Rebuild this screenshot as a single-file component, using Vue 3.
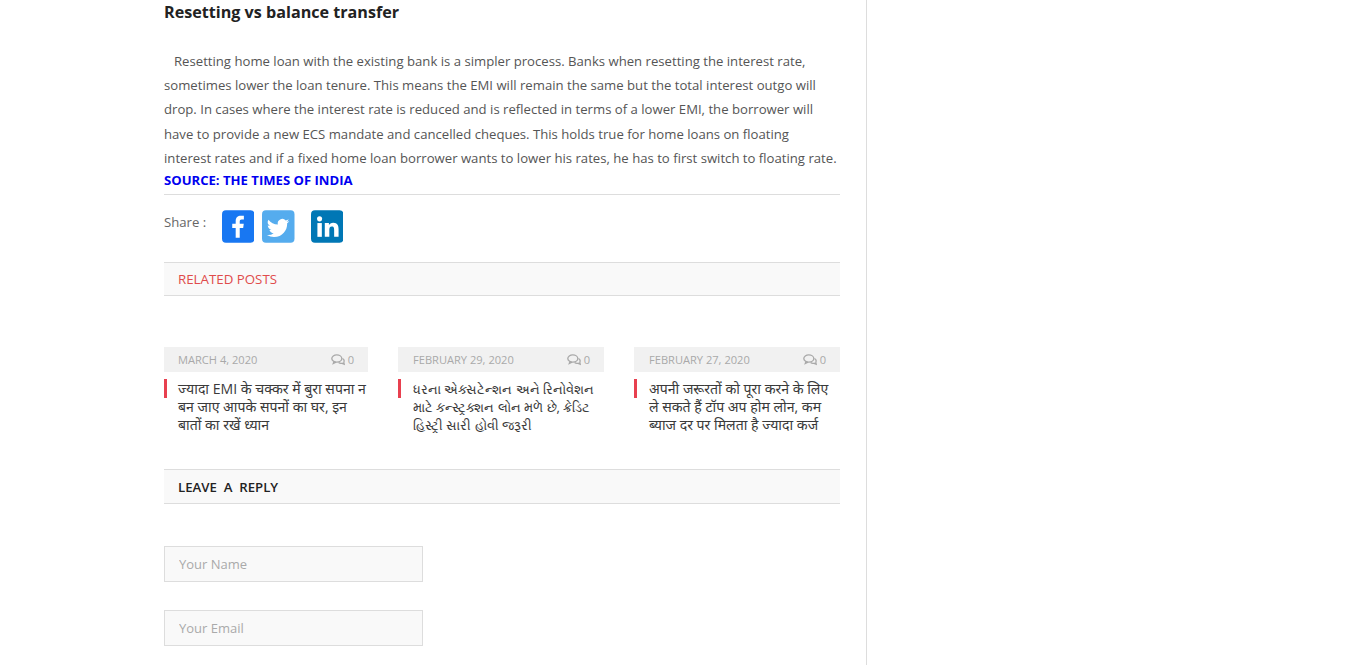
<script setup>
const posts = [
  { date: 'MARCH 4, 2020', lang: 'hi', title: 'ज्यादा EMI के चक्कर में बुरा सपना न बन जाए आपके सपनों का घर, इन बातों का रखें ध्यान' },
  { date: 'FEBRUARY 29, 2020', lang: 'gu', title: 'ધરના એક્સટેન્શન અને રિનોવેશન માટે કન્સ્ટ્રક્શન લોન મળે છે, ક્રેડિટ હિસ્ટ્રી સારી હોવી જરૂરી' },
  { date: 'FEBRUARY 27, 2020', lang: 'hi', title: 'अपनी जरूरतों को पूरा करने के लिए ले सकते हैं टॉप अप होम लोन, कम ब्याज दर पर मिलता है ज्यादा कर्ज' }
]
</script>

<template>
  <div class="page">
    <main class="content">
      <h2 class="heading">Resetting vs balance transfer</h2>
      <p class="body-text">Resetting home loan with the existing bank is a simpler process. Banks when resetting the interest rate, sometimes lower the loan tenure. This means the EMI will remain the same but the total interest outgo will drop. In cases where the interest rate is reduced and is reflected in terms of a lower EMI, the borrower will have to provide a new ECS mandate and cancelled cheques. This holds true for home loans on floating interest rates and if a fixed home loan borrower wants to lower his rates, he has to first switch to floating rate.</p>
      <div class="source">SOURCE: THE TIMES OF INDIA</div>

      <div class="share">
        <span class="share-label">Share :</span>
        <svg class="icon fb" viewBox="0 0 33 33" aria-label="Facebook">
          <rect width="33" height="33" rx="4" fill="#1877f2" />
          <path d="M18 28V18h3.500l.6-4.200H18v-2.400c0-1.200.4-2 2.100-2h2.100V5.700c-.4 0-1.700-.2-3.100-.2-3.100 0-5.200 1.900-5.200 5.300v3H10.400V18h3.500v10z" fill="#fff" />
        </svg>
        <svg class="icon tw" viewBox="0 0 33 33" aria-label="Twitter">
          <rect width="33" height="33" rx="4" fill="#55acee" />
          <path transform="translate(1.600 3) scale(.9)" d="M29 8.900c-.9.400-1.900.700-3 .8 1.100-.6 1.900-1.600 2.300-2.800-1 .6-2.100 1-3.300 1.200a5.200 5.200 0 0 0-8.900 4.700C11.800 12.600 8 10.500 5.500 7.300a5.200 5.200 0 0 0 1.600 6.900c-.9 0-1.700-.2-2.400-.6v.1c0 2.500 1.800 4.600 4.200 5.100-.8.200-1.600.2-2.300.1.700 2.100 2.600 3.500 4.800 3.600A10.400 10.400 0 0 1 3.800 24.600a14.700 14.700 0 0 0 8 2.300c9.600 0 14.800-7.900 14.800-14.800v-.7c1-.7 1.800-1.500 2.400-2.500z" fill="#fff" />
        </svg>
        <svg class="icon in" viewBox="0 0 33 33" aria-label="LinkedIn">
          <rect width="33" height="33" rx="4" fill="#0077b5" />
          <circle cx="8.700" cy="8.700" r="2.600" fill="#fff" />
          <rect x="6.500" y="13" width="4.500" height="14" fill="#fff" />
          <path d="M14 13h4.200v1.900c.7-1.200 2.200-2.300 4.400-2.300 4.500 0 5.400 3 5.400 6.800V27h-4.500v-6.800c0-1.700 0-3.700-2.300-3.700s-2.600 1.800-2.600 3.600V27H14z" fill="#fff" />
        </svg>
      </div>

      <div class="bar related">RELATED POSTS</div>

      <div class="posts">
        <article v-for="post in posts" :key="post.date" class="post">
          <div class="meta">
            <span>{{ post.date }}</span>
            <span class="comments">
              <svg class="bubble" viewBox="0 0 14 12" fill="none" stroke="#a9a9a9" stroke-width="1.300">
                <ellipse cx="5.800" cy="4.500" rx="5" ry="3.600" />
                <path d="M3 7.500 2.300 9.500 5 8.100" />
                <path d="M11.500 4.500c1.500.9 2 2.300 1.300 3.700l.4 2-2.100-.9c-1.300.3-2.600 0-3.500-.8" />
              </svg>
              0
            </span>
          </div>
          <h3 class="title" :class="post.lang" :lang="post.lang">{{ post.title }}</h3>
        </article>
      </div>

      <div class="bar reply">LEAVE&nbsp; A&nbsp; REPLY</div>

      <form class="form">
        <input class="field" type="text" placeholder="Your Name" />
        <input class="field" type="email" placeholder="Your Email" />
      </form>
    </main>
  </div>
</template>

<style>
html, body { margin: 0; background: #fff; overflow: hidden; }
</style>

<style scoped>
.page {
  height: 665px;
  overflow: hidden;
  font-family: "Open Sans", "Noto Sans", sans-serif;
  color: #555;
}
.content {
  box-sizing: border-box;
  width: 703px;
  height: 665px;
  margin-left: 164px;
  padding-right: 26px;
  border-right: 1px solid #ddd;
}
.heading {
  margin: 0;
  padding-top: 1px;
  font-size: 16.150px;
  line-height: 22px;
  font-weight: 700;
  color: #222;
}
.body-text {
  margin: 25.800px 0 0;
  padding-right: 2px;
  font-size: 13.150px;
  line-height: 24.300px;
  color: #555;
  text-indent: 10px;
}
.source {
  padding: 0 0 4px;
  font-size: 13.100px;
  line-height: 20px;
  font-weight: 700;
  color: #0000f0;
  border-bottom: 1px solid #ddd;
}
.share {
  display: flex;
  align-items: flex-start;
  padding-top: 15px;
}
.share-label {
  width: 57.500px;
  font-size: 13.150px;
  line-height: 25px;
  color: #666;
}
.icon { width: 32.500px; height: 33px; display: block; }
.tw { margin-left: 8px; }
.in { margin-left: 16px; }
.bar {
  box-sizing: border-box;
  padding-left: 14px;
  background: #f9f9f9;
  border-top: 1px solid #ddd;
  border-bottom: 1px solid #ddd;
  font-size: 13.200px;
}
.related { height: 34px; line-height: 32px; margin-top: 19px; color: #e04b4b; font-weight: 500; font-size: 13.300px; }
.reply { height: 35px; line-height: 34px; margin-top: 35px; color: #222; font-weight: 600; }
.posts {
  display: grid;
  grid-template-columns: 204px 206px 206px;
  column-gap: 30px;
  margin-top: 51px;
}
.meta {
  display: flex;
  justify-content: space-between;
  align-items: center;
  height: 25px;
  padding: 0 14px;
  background: #f1f1f1;
  font-size: 11.100px;
  color: #a9a9a9;
}
.post:not(:first-child) .meta { padding-left: 15px; }
.post:not(:first-child) .title { padding-left: 15px; }
.comments { display: flex; align-items: center; gap: 3px; }
.bubble { width: 14px; height: 12px; display: block; }
.title {
  margin: 8px 0 0;
  padding-left: 14px;
  font-size: 14.100px;
  line-height: 18px;
  font-weight: 400;
  color: #3a3a3a;
  position: relative;
  height: 54px;
}
.title.gu { font-size: 13px; }
.title::before {
  content: "";
  position: absolute;
  left: 0;
  top: -1px;
  width: 3px;
  height: 19px;
  background: #e8404f;
}
.form { display: flex; flex-direction: column; gap: 28px; margin-top: 42px; }
.field {
  box-sizing: border-box;
  width: 259px;
  height: 36px;
  padding: 0 14px 1px;
  background: #f9f9f9;
  border: 1px solid #ddd;
  outline: none;
  font-family: inherit;
  font-size: 13px;
}
.field::placeholder { color: #aaa; opacity: 1; }
</style>
